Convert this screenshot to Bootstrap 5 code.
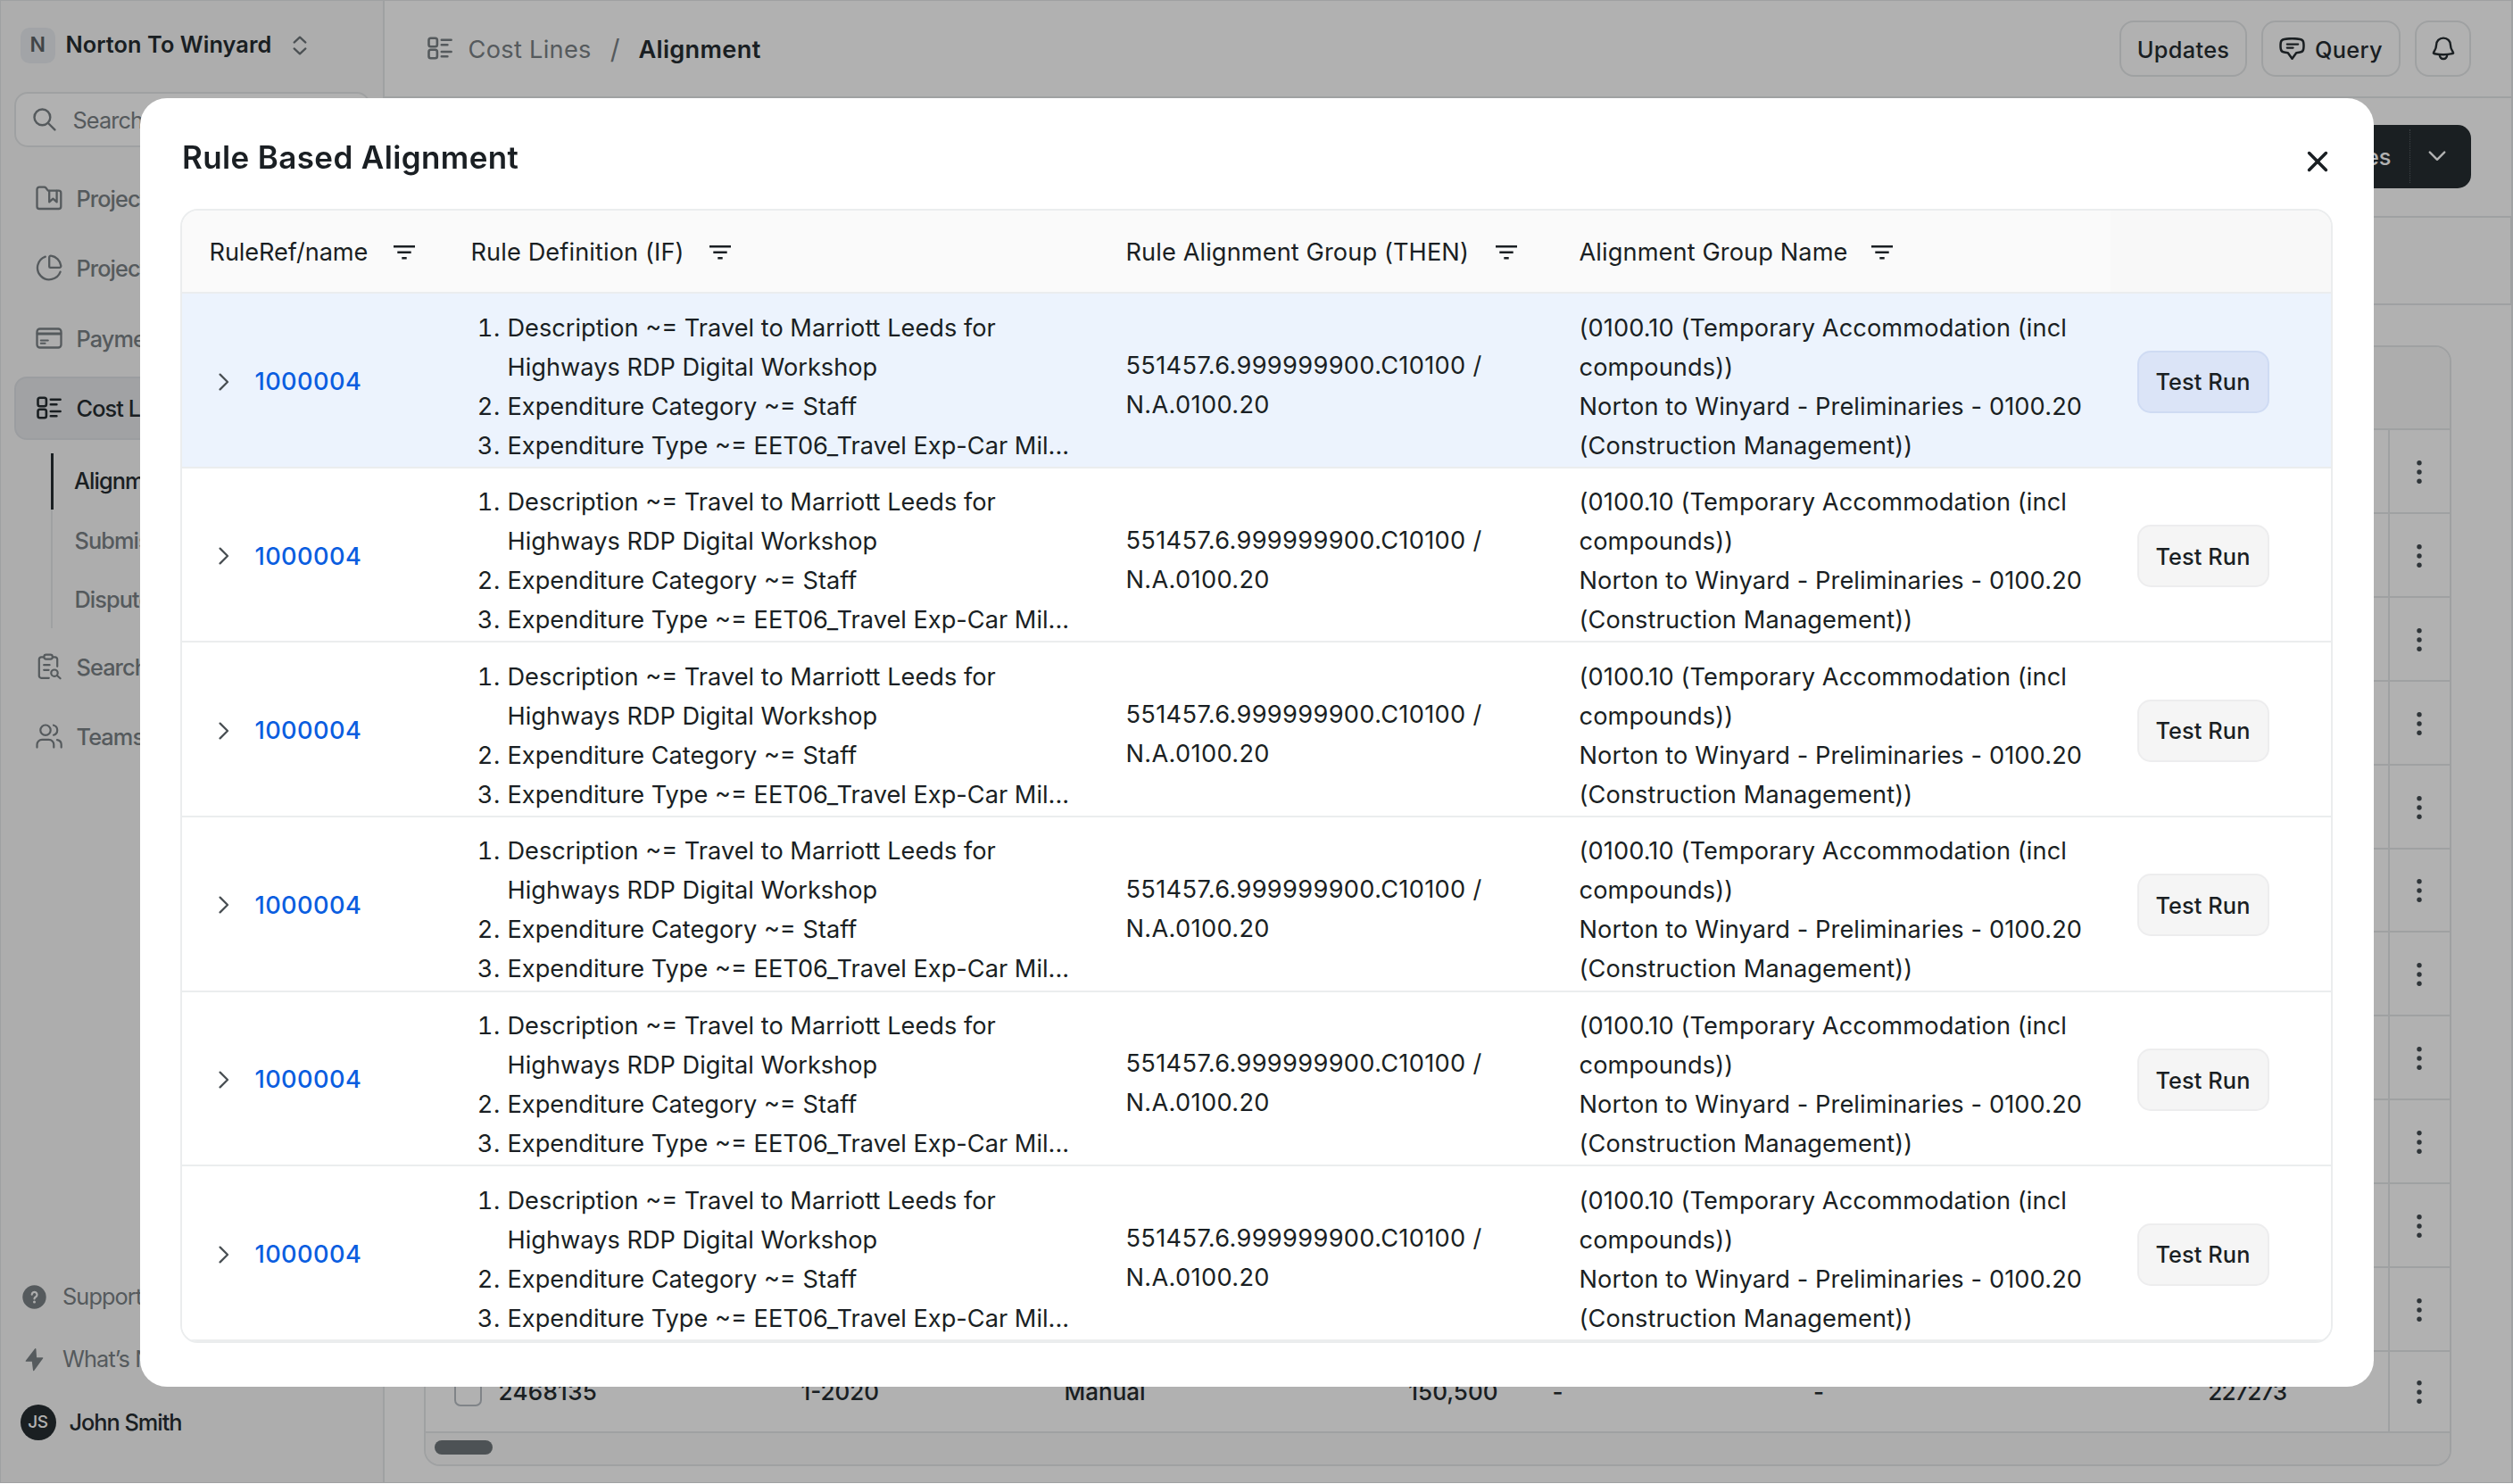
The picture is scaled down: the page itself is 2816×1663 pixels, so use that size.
<!DOCTYPE html>
<html lang="en">
<head>
<meta charset="utf-8">
<meta name="viewport" content="width=device-width, initial-scale=1">
<title>Rule Based Alignment</title>
<link rel="stylesheet" href="https://cdn.jsdelivr.net/npm/bootstrap@5.3.0/dist/css/bootstrap.min.css">
<style>
:root{--ink:#262d31;--soft:#7b8286;--line:#e6e8ea;--m-ink:#1a1f23;--m-line:#ebedee}
html,body{overflow:hidden}
body{font-family:Inter,"Liberation Sans",sans-serif;color:var(--ink);background:#fff;font-size:25.3px;line-height:1.3}
svg{display:block;flex:none;fill:none;stroke:currentColor;stroke-linecap:round;stroke-linejoin:round}
.app-shell{height:1662px;width:2816px;border:1.5px solid var(--line);border-right-width:2px}
/* sidebar */
.side{width:430px;flex:none;background:#fafafa;border-right:2px solid var(--line);padding:30px 14px 47px 14.5px;font-weight:500;letter-spacing:-.9px;color:var(--soft)}
.brand{height:39.5px;padding-left:7px;gap:11.5px;color:var(--ink);font-weight:600;letter-spacing:.08px}
.brand-tile{width:39.5px;height:39.5px;border-radius:10px;background:#e9edf1;color:#5e6468;font-size:23px}
.search-box{height:62px;margin-top:32px;border:2px solid var(--line);border-radius:15px;background:#fff;padding-left:19px;gap:19px;font-weight:400}
.search-box span,.nav-item-x span{padding-top:3px}
.nav-side{margin-top:22px;gap:8.2px}
.nav-item-x{height:70.4px;padding-left:22.5px;gap:15.5px;border:2px solid transparent;border-radius:14px}
.nav-item-x.on{background:#e8eaed;border-color:#e0e3e7;color:var(--ink)}
.sub{margin:7.3px 0 -.7px 41px;height:196px;border-left:2px solid var(--line);gap:6.3px}
.sub span{height:60.2px;padding:3px 0 0 25px;display:flex;align-items:center}
.sub .on{color:var(--ink);border-left:3.5px solid var(--ink);height:62.7px;margin:0 0 -2.5px -2px;padding:.5px 0 0 23.5px}
.side-foot{gap:30.2px;font-weight:400}
.side-foot>div{height:40px;padding-left:9.5px;gap:18px}
.side-foot>.who{padding-left:7px;gap:15px;color:var(--ink);font-weight:500;letter-spacing:-1px}
.who-dot{width:40px;height:40px;border-radius:50%;background:var(--ink);color:#fff;font-size:19px;font-weight:500;letter-spacing:-.3px}
/* page */
.topbar{height:109px;border-bottom:2px solid var(--line);padding:0 45px 0 47.5px}
.crumb{font-size:27.2px;letter-spacing:.3px;color:var(--soft)}
.crumb span{padding-top:2px}
.btn-line{height:63px;border:2px solid var(--line);border-radius:16px;font-size:25.3px;font-weight:500;letter-spacing:.35px;color:var(--ink);padding:2px 0 0}
.btn-line svg{margin-top:-2px}
.tools{height:134px;border-bottom:2px solid var(--line);padding:30px 45px 0 0}
.btn-dark-x{height:70.5px;background:var(--ink);color:#fff;border-radius:15px;font-weight:500;overflow:hidden}
.btn-dark-x .caret{width:69.5px;height:60px;border-left:1.5px dotted #596065}
.strip{height:98px;border-bottom:2px solid var(--line);border-right:1px solid var(--line)}
.grid-card{margin:45px 67px 0 44px;border:2px solid var(--line);border-radius:18px;overflow:hidden;font-size:26px;font-weight:500}
.grid-head{height:93.3px;background:#fafafa;border-bottom:2px solid var(--line)}
.grid-row{height:93.85px;border-bottom:2px solid var(--line)}
.grid-row.last{height:91px}
.grid-row>.menu{width:69px;border-left:2px solid var(--line);color:#454d52;margin-left:auto;height:100%;flex:none;padding:2px 2px 0 0}
.grid-foot{height:35.5px;background:#fafafa;padding:8px 0 0 9.5px}
.thumb{width:65px;height:16px;border-radius:8px;background:#6f777b}
.tick{width:30.5px;height:33px;border:2px solid #b9bfc5;border-radius:7px;margin-right:19px}
.c{flex:none;padding-top:2px}
/* dialog */
.modal-backdrop{--bs-backdrop-opacity:.305;height:1661.5px;width:2816px}
.modal-dialog.rules{margin:109.5px 0 0 156.7px;max-width:none;width:2503px}
.rules .modal-content{height:1444.5px;border:0;border-radius:30px;color:var(--m-ink)}
.rules-head{height:124.5px;padding:8.5px 51px 0 47.3px;flex:none}
.rules-title{font-size:35px;font-weight:600;letter-spacing:.38px;margin:0;line-height:1.2}
.rules-table{margin:0 45.5px 0 45.3px;border:2px solid var(--m-line);border-radius:20px;overflow:hidden;font-size:27.2px;line-height:44px}
.r{display:flex;height:195.6px;border-bottom:2px solid var(--m-line);background:#fff}
.r.h{height:93.3px;background:#fafafa;letter-spacing:.1px}
.r.h>div{padding-top:3px;gap:20px}
.r.h>div:first-child{letter-spacing:-.1px}
.r.picked{background:#ecf3fd}
.r>div{flex:none;display:flex;align-items:center;padding-left:30.5px}
.r>div:nth-child(1){width:293px}.r>div:nth-child(2){width:734px}.r>div:nth-child(3){width:508px}.r>div:nth-child(4){width:626px}.r>div:nth-child(5){flex:1}
.r.h>div:nth-child(5){background:#f8f8f8}
.r:not(.h)>.t{padding-top:15px;letter-spacing:.11px}
.r:not(.h)>.t.code{padding-top:12px;letter-spacing:.34px}
.r:not(.h)>.k{padding-top:3px}
.r>.k:first-child a{color:#0b5ee0;font-weight:500;letter-spacing:.4px;text-decoration:none;margin-left:28.5px;padding-top:1px}
.r ol{margin:0;padding-left:41px;width:600px;letter-spacing:0;white-space:nowrap}
.r li::marker{letter-spacing:.5px}
.test{width:148px;height:70px;border:2px solid #ededee;border-radius:15px;background:#f5f5f5;font-size:25.3px;font-weight:500;letter-spacing:.1px;padding:1px 1px 0 0;color:var(--m-ink);margin-left:-.5px}
.picked .test{background:#dbe4f7;border-color:#cfdbf3}
</style>
<script src="https://cdn.jsdelivr.net/npm/bootstrap@5.3.0/dist/js/bootstrap.bundle.min.js"></script>
</head>
<body>
<svg width="0" height="0" class="position-absolute">
  <symbol id="i-list" viewBox="0 0 28 26"><g stroke-width="2.6"><rect x="1.5" y="1.8" width="9.4" height="9.4" rx="2.2"/><rect x="1.5" y="14.8" width="9.4" height="9.4" rx="2.2"/><path d="M15.8 3.8h10.8M15.8 9.2h6.6M15.8 17h10.8M15.8 22.3h6.6"/></g></symbol>
  <symbol id="i-filter" viewBox="0 0 24 18"><path d="M0 2.2h24M4.3 8.8h15.4M9.3 15.3h5.4" stroke-width="2.5" stroke-linecap="butt"/></symbol>
  <symbol id="i-dots" viewBox="0 0 10 28"><g fill="currentColor" stroke="none"><circle cx="5" cy="3.7" r="2.7"/><circle cx="5" cy="14" r="2.7"/><circle cx="5" cy="24.3" r="2.7"/></g></symbol>
</svg>

<div class="app-shell d-flex">
  <aside class="side d-flex flex-column">
    <div class="brand d-flex align-items-center">
      <span class="brand-tile d-flex align-items-center justify-content-center">N</span>
      <span>Norton To Winyard</span>
      <svg width="16" height="22" viewBox="0 0 16 22" stroke-width="2.2" style="margin-left:12px;color:#6d7478"><path d="M1.6 7.6 8 1.6l6.4 6M1.6 14.4l6.4 6 6.4-6"/></svg>
    </div>
    <div class="search-box d-flex align-items-center">
      <svg width="26" height="26" viewBox="0 0 26 26" stroke-width="2.4"><circle cx="10.4" cy="10.4" r="8.9"/><path d="M17 17l7.4 7.4"/></svg>
      <span>Search</span>
    </div>
    <nav class="nav-side d-flex flex-column">
      <div class="nav-item-x d-flex align-items-center"><svg width="30" height="28" viewBox="0 0 30 28" stroke-width="2.3"><path d="M1.5 4.2A2.6 2.6 0 0 1 4.1 1.6h5.4c.8 0 1.4.3 1.9.9l2.4 3.1h11.9a2.6 2.6 0 0 1 2.6 2.6v15.2a2.6 2.6 0 0 1-2.6 2.6H4.1a2.6 2.6 0 0 1-2.6-2.6z"/><path d="M15.2 6v12.4l4.2-3.8 4.2 3.8V6"/></svg><span>Project</span></div>
      <div class="nav-item-x d-flex align-items-center"><svg width="30" height="30" viewBox="0 0 30 30" stroke-width="2.3"><path d="M10.8 2.6A13.2 13.2 0 1 0 27.6 19.6"/><path d="M15.2 3.6c0-1.3.8-2.2 2.1-1.9a13.2 13.2 0 0 1 11 11c.2 1.3-.6 2.2-1.9 2.2H16.4c-.8 0-1.2-.4-1.2-1.2z"/></svg><span>Project</span></div>
      <div class="nav-item-x d-flex align-items-center"><svg width="30" height="24" viewBox="0 0 30 24" stroke-width="2.3"><rect x="1.5" y="1.5" width="27" height="21" rx="3.2"/><path d="M2 7h26" stroke-width="2.8"/><path d="M5.8 14.6h8M5.8 17.8h4.8" stroke-width="2"/></svg><span>Payments</span></div>
      <div class="nav-item-x on d-flex align-items-center"><svg width="30" height="26"><use href="#i-list"/></svg><span>Cost Lines</span></div>
      <div class="sub d-flex flex-column"><span class="on">Alignment</span><span>Submissions</span><span>Disputes</span></div>
      <div class="nav-item-x d-flex align-items-center"><svg width="30" height="30" viewBox="0 0 30 30" stroke-width="2.2"><path d="M8.8 4.4H6.2a2.4 2.4 0 0 0-2.4 2.4v18.6a2.4 2.4 0 0 0 2.4 2.4h8.6M19.4 4.4h2.4a2.4 2.4 0 0 1 2.4 2.4v8"/><rect x="9.4" y="1.6" width="9.4" height="5" rx="2.3"/><path d="M9.2 13.2h6.4M9.2 18.8h5.4"/><circle cx="21" cy="22.2" r="3.7"/><path d="M23.9 25l3.7 3.3"/></svg><span>Search</span></div>
      <div class="nav-item-x d-flex align-items-center"><svg width="30" height="28" viewBox="0 0 30 28" stroke-width="2.2"><circle cx="11" cy="7.2" r="5.7"/><path d="M20 1.7a5.7 5.7 0 0 1 0 11M1.5 26.6v-3.2a5.6 5.6 0 0 1 5.6-5.6h7.6a5.6 5.6 0 0 1 5.6 5.6v3.2M24 18.2c2.9.5 4.7 2.7 4.7 5.3v3.1"/></svg><span>Teams</span></div>
    </nav>
    <div class="side-foot d-flex flex-column mt-auto">
      <div class="d-flex align-items-center"><svg width="27" height="27" viewBox="0 0 27 27"><circle cx="13.5" cy="13.5" r="13.2" fill="currentColor" stroke="none"/><path d="M10.7 10.7a2.9 2.9 0 1 1 4.4 2.5c-1 .6-1.6 1.1-1.6 2.2" stroke="#fafafa" stroke-width="2.2"/><circle cx="13.5" cy="19" r="1.5" fill="#fafafa" stroke="none"/></svg><span>Support</span></div>
      <div class="d-flex align-items-center"><svg width="27" height="27" viewBox="0 0 27 27"><path d="M14.2 1.2 3.8 14.8c-.3.5-.1 1 .5 1h6.5L12 25.6c.1.7.8.8 1.2.3l10-13.7c.3-.5.1-1-.5-1h-6.6L15.4 1.6c-.1-.7-.8-.8-1.2-.4z" fill="currentColor" stroke="none"/></svg><span>What’s New</span></div>
      <div class="who d-flex align-items-center"><span class="who-dot d-flex align-items-center justify-content-center">JS</span><span>John Smith</span></div>
    </div>
  </aside>

  <main class="flex-grow-1">
    <header class="topbar d-flex align-items-center">
      <div class="crumb d-flex align-items-center">
        <svg width="28" height="26" style="margin-right:18px"><use href="#i-list"/></svg>
        <span>Cost Lines</span><span style="margin:0 20.5px 0 21px;font-size:30px;line-height:1">/</span><span style="color:var(--ink);font-weight:600">Alignment</span>
      </div>
      <div class="d-flex ms-auto" style="gap:16px">
        <button class="btn btn-line" style="width:143px">Updates</button>
        <button class="btn btn-line d-flex align-items-center justify-content-center" style="width:156px;gap:11px"><svg width="29" height="26" viewBox="0 0 29 26" stroke-width="2.5"><path d="M5.6 1.9C11 1 18 1 23.4 1.9c2 .3 3.5 1.6 3.8 3.6.4 2.5.4 5 0 7.5-.3 2-1.8 3.3-3.8 3.6l-4.2.6-4.7 6.6-4.700-6.600-4.200-.6c-2-.3-3.500-1.600-3.800-3.600-.4-2.500-.4-5 0-7.500.3-2 1.800-3.300 3.800-3.600z"/><path d="M8.800 7.600h12.400M8.800 11.600h6.800" stroke-width="2.200"/></svg><span>Query</span></button>
        <button class="btn btn-line d-flex align-items-center justify-content-center" style="width:63px"><svg width="26" height="27" viewBox="0 0 26 27" stroke-width="2.4"><path d="M13 1.6c-4.8 0-7.8 3.4-7.9 7.6-.1 4.6-1.6 6.2-3 8.4-.7 1 .1 1.4 1.100 1.600 6.400 1.400 13.200 1.400 19.600 0 1-.2 1.800-.6 1.100-1.600-1.400-2.200-2.900-3.800-3-8.400C20.800 5 17.800 1.600 13 1.600z"/><path d="M8.800 20.600c.3 2.700 1.900 4.400 4.200 4.400s3.900-1.700 4.200-4.400"/></svg></button>
      </div>
    </header>
    <section class="tools d-flex justify-content-end">
      <div class="btn-dark-x d-flex align-items-center"><span style="padding:2px 20px 0">Cost Lines</span><span class="caret d-flex align-items-center" style="padding-left:20px"><svg width="20" height="12" viewBox="0 0 20 12" stroke-width="2.4"><path d="M1.800 1.600 10 9.800l8.200-8.200"/></svg></span></div>
    </section>
    <section class="strip"></section>
    <section class="grid-card" id="grid">
      <div class="grid-head"></div>
    </section>
  </main>
</div>

<div class="modal-backdrop show"></div>
<div class="modal d-block" tabindex="-1">
  <div class="modal-dialog rules">
    <div class="modal-content">
      <div class="rules-head d-flex align-items-center justify-content-between">
        <h1 class="rules-title">Rule Based Alignment</h1>
        <svg width="24" height="24" viewBox="0 0 24 24" stroke-width="3.6" style="margin-top:10px"><path d="M2.600 2.600l18.800 18.800M21.400 2.600 2.600 21.400"/></svg>
      </div>
      <div class="rules-table" id="rules">
        <div class="r h">
          <div><span>RuleRef/name</span><svg width="24" height="18" style="margin-left:8.5px"><use href="#i-filter"/></svg></div>
          <div><span>Rule Definition (IF)</span><svg width="24" height="18" style="margin-left:8px"><use href="#i-filter"/></svg></div>
          <div><span>Rule Alignment Group (THEN)</span><svg width="24" height="18" style="margin-left:10px"><use href="#i-filter"/></svg></div>
          <div><span>Alignment Group Name</span><svg width="24" height="18" style="margin-left:6.5px"><use href="#i-filter"/></svg></div>
          <div></div>
        </div>
      </div>
    </div>
  </div>
</div>

<script>
const dots = '<span class="menu d-flex align-items-center justify-content-center"><svg width="10" height="28"><use href="#i-dots"/></svg></span>';
const grid = document.getElementById('grid');
for (let i = 0; i < 11; i++) grid.insertAdjacentHTML('beforeend', `<div class="grid-row d-flex">${dots}</div>`);
grid.insertAdjacentHTML('beforeend', `<div class="grid-row last d-flex align-items-center" style="padding-left:32px">
  <span class="tick"></span>
  <span class="c" style="width:339px;letter-spacing:.3px">2468135</span><span class="c" style="width:295px">1-2020</span>
  <span class="c" style="width:300px">Manual</span><span class="c text-end" style="width:186px">150,500</span>
  <span class="c" style="width:292.5px;padding-left:61px;box-sizing:content-box;margin-right:-62px">-</span>
  <span class="c" style="width:270px;padding-left:62px;box-sizing:content-box">-</span>
  <span class="c text-end" style="width:260px;letter-spacing:-1px">227273</span>${dots}</div>
  <div class="grid-foot"><div class="thumb"></div></div>`);

const rules = document.getElementById('rules');
for (let i = 0; i < 6; i++) rules.insertAdjacentHTML('beforeend', `<div class="r${i ? '' : ' picked'}">
  <div class="k"><svg width="12" height="20" viewBox="0 0 12 20" stroke-width="2.3" style="margin-left:10.5px;color:#4a5054"><path d="M1.6 1.6 10 10l-8.4 8.4"/></svg><a href="#">1000004</a></div>
  <div class="t"><ol><li>Description ~= Travel to Marriott Leeds for<br>Highways RDP Digital Workshop</li><li>Expenditure Category ~= Staff</li><li>Expenditure Type ~= EET06_Travel Exp-Car Mil...</li></ol></div>
  <div class="t code"><span>551457.6.999999900.C10100 /<br>N.A.0100.20</span></div>
  <div class="t"><span>(0100.10 (Temporary Accommodation (incl<br>compounds))<br>Norton to Winyard - Preliminaries - 0100.20<br>(Construction Management))</span></div>
  <div class="k"><button class="btn test">Test Run</button></div>
</div>`);
</script>
</body>
</html>
